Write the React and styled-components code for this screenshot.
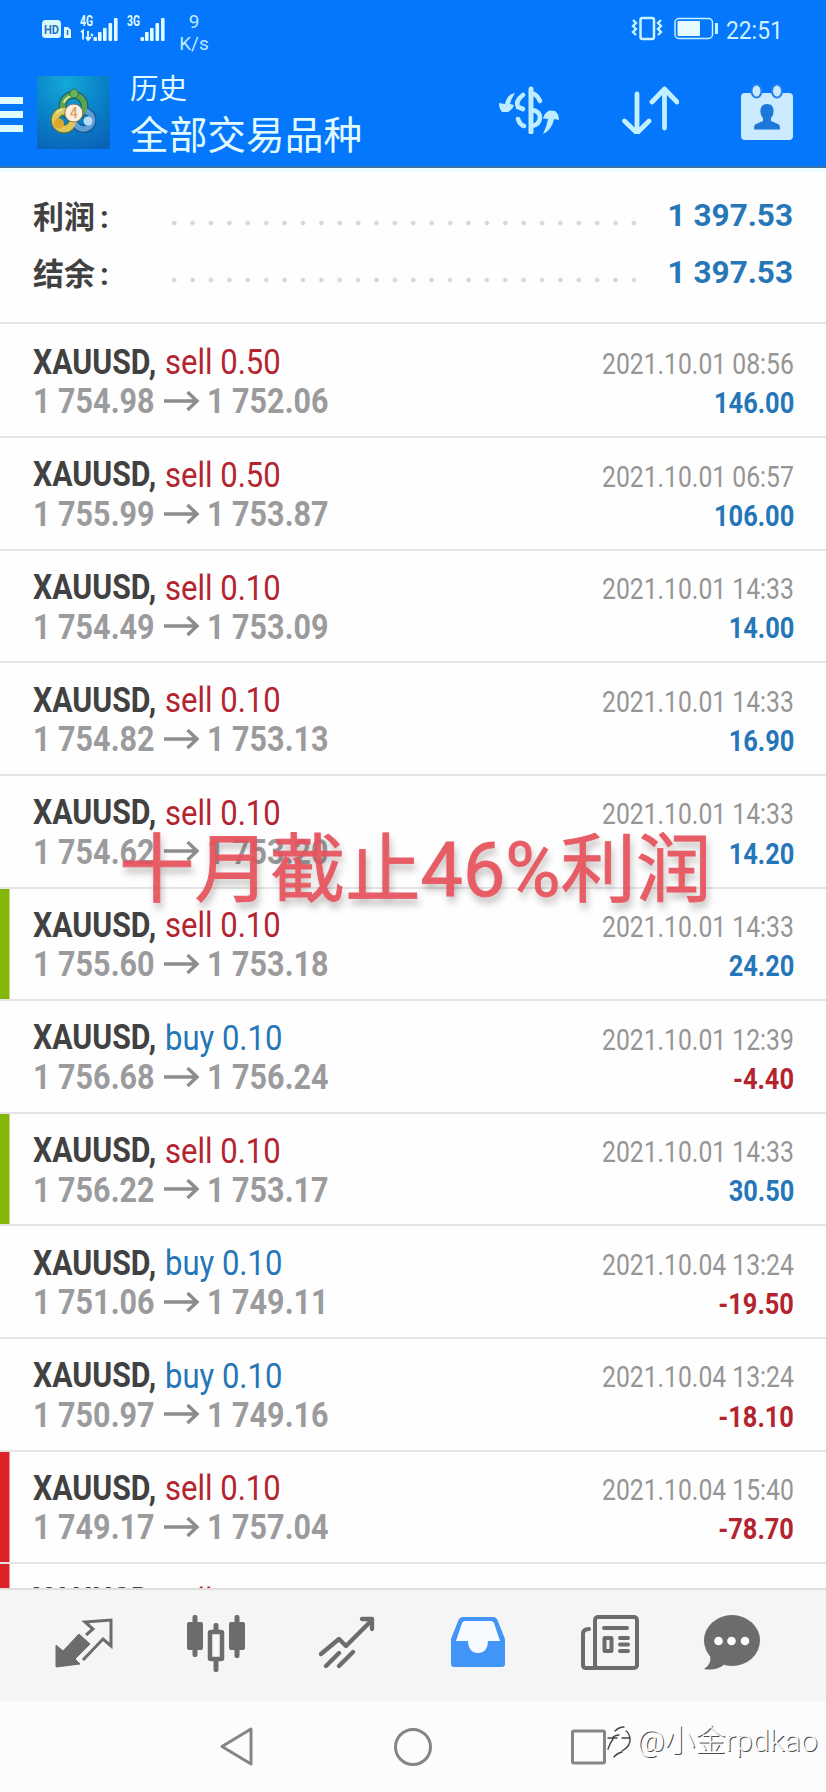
import React from 'react';
import styled, { createGlobalStyle, css } from 'styled-components';

const Global = createGlobalStyle`
  * { box-sizing: border-box; }
  html, body { margin: 0; padding: 0; background: #fdfdfd; }
  body { font-family: Roboto, "Noto Sans CJK SC", sans-serif; }
  svg { display: block; }
`;

const Screen = styled.div`
  position: relative;
  width: 826px;
  height: 1792px;
  overflow: hidden;
  display: flex;
  flex-direction: column;
  background: #fefefe;
`;

const Header = styled.header`
  flex: none;
  height: 168px;
  background: #0577fd;
  border-bottom: 2px solid #3a74a6;
  color: #e2fbff;
`;

const StatusBar = styled.div`
  display: flex;
  justify-content: space-between;
  height: 60px;
  padding: 11px 44px 0 41px;
`;

const StatusGroup = styled.div`
  display: flex;
  align-items: flex-start;
`;

const StatusItem = styled.div`
  margin-top: ${(p) => p.$top}px;
  margin-left: ${(p) => p.$left || 0}px;
`;

const Speed = styled.div`
  width: 30px;
  margin-left: 12px;
  text-align: center;
  font-size: 19px;
  line-height: 22px;
  color: #bfe9ff;
`;

const Clock = styled.div`
  width: 56px;
  margin-left: 7px;
  font-size: 26.5px;
  line-height: 38px;
  color: #cdf1ff;
  white-space: nowrap;
  span { display: inline-block; transform: scaleX(0.86); transform-origin: left; }
`;

const AppBar = styled.div`
  display: flex;
  align-items: flex-start;
  height: 106px;
`;

const MenuButton = styled.div`
  display: flex;
  flex-direction: column;
  gap: 7.5px;
  width: 23px;
  margin-top: 37px;
  i { height: 6.5px; background: #dffcff; }
`;

const AppIcon = styled.div`
  margin: 16px 0 0 14px;
`;

const Titles = styled.div`
  margin: 10px 0 0 20px;
  width: 290px;
`;

const Caption = styled.div`
  font-size: 28.5px;
  line-height: 34px;
  font-family: "Noto Sans CJK SC", sans-serif;
`;

const Heading = styled.div`
  margin-top: 4px;
  font-size: 38.7px;
  line-height: 48px;
  white-space: nowrap;
  font-family: "Noto Sans CJK SC", sans-serif;
`;

const Actions = styled.div`
  display: flex;
  align-items: flex-start;
  padding-top: 24px;
  margin-left: 78px;
  gap: 61px;
`;

const Summary = styled.section`
  flex: none;
  height: 154px;
  padding: 15px 33px 0;
  border-top: 4px solid #eafdff;
`;

const SummaryRow = styled.div`
  display: flex;
  align-items: center;
  height: 57.3px;
`;

const SummaryLabel = styled.div`
  width: 132px;
  font: 700 31px/57px "Noto Sans CJK SC", sans-serif;
  color: #414141;
  span { font-family: Roboto; margin-left: 5px; }
`;

const Dots = styled.div`
  width: 478px;
  height: 6px;
  margin-top: 14px;
  background: radial-gradient(circle, #d6d6d6 0 1.6px, transparent 2.9px) 0 0 / 18.4px 6px repeat-x;
`;

const SummaryValue = styled.div`
  flex: 1;
  text-align: right;
  font-size: 31.5px;
  font-weight: 700;
  color: #2676b8;
  white-space: nowrap;
`;

const List = styled.section`
  flex: none;
  height: 1266px;
  overflow: hidden;
  border-top: 2px solid #e4e4e4;
`;

const edgeColors = { green: '#83b50a', red: '#dc2227' };

const Row = styled.article`
  display: flex;
  justify-content: space-between;
  height: ${(p) => (p.$first ? 114.2 : 112.6)}px;
  padding: ${(p) => (p.$first ? 18.5 : 17)}px 32px 0 33px;
  border-bottom: 2px solid #e4e4e4;
  ${(p) => p.$edge && css`
    background: linear-gradient(${edgeColors[p.$edge]}, ${edgeColors[p.$edge]}) left / 9.5px 100% no-repeat;
  `}
`;

const Line = styled.div`
  display: flex;
  align-items: center;
  height: 39.6px;
  white-space: nowrap;
`;

const Narrow = styled.span`
  display: block;
  transform: scaleX(${(p) => p.$x});
  transform-origin: ${(p) => p.$from || 'left'};
`;

const Cell = styled.span`
  display: block;
  width: ${(p) => p.$w}px;
`;

const Symbol = styled(Narrow)`
  font-size: 35px;
  font-weight: 700;
  color: #414141;
`;

const Order = styled(Narrow)`
  font-size: 35.5px;
  color: ${(p) => (p.$buy ? '#2476b8' : '#b3242f')};
`;

const Price = styled(Narrow)`
  font-size: 35px;
  font-weight: 700;
  color: #9b9b9d;
`;

const Side = styled.div`
  display: flex;
  flex-direction: column;
  align-items: flex-end;
  padding-top: 1.2px;
`;

const Time = styled(Narrow)`
  font-size: 30px;
  color: #959595;
`;

const Profit = styled(Narrow)`
  font-size: 29.5px;
  font-weight: 700;
  color: ${(p) => (p.$loss ? '#b3242f' : '#2476b8')};
`;

const Banner = styled.div`
  position: absolute;
  left: 119px;
  top: 815px;
  font: 400 75.4px/110px Roboto, "Noto Sans CJK SC", sans-serif;
  -webkit-text-stroke: 0.8px #e6505a;
  color: #e6505a;
  opacity: 0.92;
  text-shadow: 2px 6px 7px rgba(70, 50, 50, 0.36);
  white-space: nowrap;
`;

const TabBar = styled.nav`
  flex: none;
  display: grid;
  grid-template-columns: repeat(5, 131.4px) 114px;
  justify-items: center;
  height: 113px;
  padding: 24px 0 0 18.5px;
  background: #f5f5f5;
  border-top: 2px solid #dedede;
  color: #6c6c6c;
`;

const SystemBar = styled.div`
  flex: 1;
  display: flex;
  align-items: flex-start;
  padding: 25px 0 0 219px;
  background: #fcfcfc;
`;

const SysSlot = styled.div`
  width: ${(p) => p.$w}px;
`;

const Watermark = styled.div`
  position: absolute;
  left: 607px;
  top: 1720px;
  display: flex;
  align-items: center;
  color: #fcfcfc;
  font: 300 30.4px/42px Roboto, "Noto Sans CJK SC", sans-serif;
  text-shadow: 1px 1px 0.5px #4a4a4a;
  white-space: nowrap;
  span { margin-left: 5px; display: block; }
`;

function Signal({ label, data }) {
  return (
    <svg width="40" height="30" viewBox="0 0 40 30" fill="currentColor">
      <text x="0" y="14" fontSize="14" fontWeight="700" textLength="13" lengthAdjust="spacingAndGlyphs">{label}</text>
      {data && <path d="M1 20l2-1.500v9M8 19v8M6 25l2 3 3-3M11 22l2 2" stroke="currentColor" strokeWidth="1.800" fill="none" />}
      {[[13.5, 4], [18, 9], [23, 13], [28.500, 18], [34, 23]].map(([x, h]) => (
        <rect key={x} x={x} y={29 - h} width="3.600" height={h} rx="1" />
      ))}
    </svg>
  );
}

function HdBadge() {
  return (
    <svg width="31" height="20" viewBox="0 0 31 20">
      <rect x="1" y="1" width="19" height="18" rx="3.500" fill="#d9f8ff" />
      <text x="3" y="14.500" fontSize="12.500" fontWeight="700" fill="#2a74c0" textLength="15" lengthAdjust="spacingAndGlyphs">HD</text>
      <path d="M23 8h4l3 3v8h-7z" fill="#d9f8ff" />
      <path d="M26.500 11v5" stroke="#2a74c0" strokeWidth="1.500" />
    </svg>
  );
}

function VibrateAndBattery() {
  return (
    <svg width="88" height="26" viewBox="0 0 88 26" fill="none" stroke="#c8f2ff">
      <rect x="9.500" y="2" width="13.500" height="21" rx="2" strokeWidth="2.500" />
      <path d="M2 4l3 3-3 3 3 3-3 3 3 3M30 4l-3 3 3 3-3 3 3 3-3 3" strokeWidth="2.400" />
      <rect x="44" y="2.500" width="37.500" height="20" rx="4" strokeWidth="1.500" />
      <rect x="46.500" y="5" width="22.500" height="15" rx="1" fill="#e4fbff" stroke="none" />
      <path d="M85.500 7v11" strokeWidth="3" />
    </svg>
  );
}

function MetaLogo() {
  return (
    <svg width="73" height="73" viewBox="0 0 73 73">
      <defs>
        <radialGradient id="bg" cx=".4" cy=".1" r="1">
          <stop offset="0" stopColor="#14a9d8" />
          <stop offset=".5" stopColor="#0a82c8" />
          <stop offset="1" stopColor="#0a62b8" />
        </radialGradient>
      </defs>
      <rect width="73" height="73" fill="url(#bg)" />
      <g fill="none">
        <circle cx="36.500" cy="30" r="11" stroke="#1f6166" strokeWidth="8" />
        <circle cx="27" cy="44" r="9" stroke="#5e7340" strokeWidth="9" />
        <circle cx="46.500" cy="44" r="9" stroke="#1d548f" strokeWidth="8" />
        <circle cx="46.500" cy="44" r="9" stroke="#5d9fd6" strokeWidth="5.500" />
        <circle cx="36.500" cy="30" r="11" stroke="#58a350" strokeWidth="5.500" />
        <circle cx="27" cy="44" r="9" stroke="#dcc75a" strokeWidth="6.500" />
        <path d="M27 26q3-6 9-6M20 37q1-3 5-3" stroke="#d9e8a0" strokeWidth="2" strokeLinecap="round" />
      </g>
      <circle cx="37" cy="17.500" r="4.300" fill="#66b35c" stroke="#2c6e5a" />
      <circle cx="22" cy="47.500" r="5" fill="#dba72c" />
      <circle cx="51" cy="45" r="4.500" fill="#b9dcf4" />
      <circle cx="36.800" cy="37" r="9" fill="#f9efe2" stroke="#8b7250" />
      <text x="36.800" y="42" textAnchor="middle" fontSize="14" fontWeight="500" fill="#dda060">4</text>
    </svg>
  );
}

function CurrencyIcon() {
  return (
    <svg width="62" height="50" viewBox="0 0 62 50" fill="none" stroke="#bdedff" strokeWidth="4.600" strokeLinecap="round">
      <path d="M33 5v43" strokeWidth="5" />
      <path d="M33 9q6 1 9 8M25 11q-8 6-5 12l5 2M34 26q8 1 8 8-1 7-8 8M20 35q2 6 6 7" />
      <path d="M17 9q-8 1-10 11l-6-1q0 6 3 9h6q5-3 6-7l-4-1q1-5 5-11z" fill="#bdedff" stroke="none" />
      <path d="M45 50q9-4 11-15l5 1q0-6-4-9l-6-.500q-5 3-6 8l5 .5q-1 7-5 15z" fill="#bdedff" stroke="none" />
    </svg>
  );
}

function SortIcon() {
  return (
    <svg width="58" height="50" viewBox="0 0 58 50" fill="none" stroke="#c3f0ff" strokeWidth="4.800" strokeLinecap="round" strokeLinejoin="round">
      <path d="M16 11v39M3.500 38L16 50l12-12M43.500 45V6M31 19L43.500 6 56 19" transform="translate(0 -1)" />
    </svg>
  );
}

function CalendarIcon() {
  return (
    <svg width="54" height="56" viewBox="0 0 54 56">
      <rect x="1" y="9" width="52" height="47" rx="4" fill="#cbeaff" />
      <g fill="#cbeaff" stroke="#2181ed" strokeWidth="2">
        <ellipse cx="16.500" cy="7" rx="5" ry="6.500" />
        <ellipse cx="37" cy="7" rx="5" ry="6.500" />
      </g>
      <path d="M27 20c-5 0-7 3.500-6.500 8 .3 3 1 4.500 2.500 6v3l-8 3.500q-1 1-1 5h26q0-4-1-5l-8-3.500v-3c1.500-1.500 2.200-3 2.500-6 .5-4.500-1.500-8-6.500-8z" fill="#1b77d8" />
    </svg>
  );
}

function ArrowIcon() {
  return (
    <svg width="54" height="22" viewBox="0 0 54 22" fill="none" stroke="#8d8d8d" strokeWidth="3.400">
      <path d="M11 10h33M34.500 1L44 10l-9.500 9" />
    </svg>
  );
}

function QuotesIcon() {
  return (
    <svg width="58" height="58" viewBox="0 0 58 58">
      <path d="M24 20l11 10-15 15 5 5-24 3V31l7 6z" fill="currentColor" stroke="currentColor" strokeLinejoin="round" />
      <path d="M31 21l7-6-8-7 26-2v26l-8-7-20 21" fill="none" stroke="currentColor" strokeWidth="3" />
    </svg>
  );
}

function CandlesIcon() {
  return (
    <svg width="60" height="60" viewBox="0 0 60 60" fill="currentColor">
      <rect x="1" y="8" width="16" height="28" rx="2" />
      <rect x="6.500" y="1" width="5" height="42" rx="2" />
      <rect x="43" y="8" width="16" height="28" rx="2" />
      <rect x="48.500" y="1" width="5" height="43" rx="2" />
      <rect x="27.500" y="9" width="5" height="49" rx="2" />
      <rect x="24" y="18" width="12" height="27" rx="1" fill="#f8f8f8" stroke="currentColor" strokeWidth="4.500" />
    </svg>
  );
}

function TrendIcon() {
  return (
    <svg width="56" height="58" viewBox="0 0 56 58" fill="none" stroke="currentColor" strokeWidth="4.300" strokeLinecap="round" strokeLinejoin="round">
      <path d="M2 40l18-15 7 7L53 6M43 5h10v10M7 52l13-13M20 52l14-14" />
    </svg>
  );
}

function InboxIcon() {
  return (
    <svg width="56" height="58" viewBox="0 0 56 58">
      <path d="M13 3h30q3 0 4.500 3L55 25v25q0 3-3 3H4q-3 0-3-3V25L8.500 6Q10 3 13 3z" fill="#4295f8" />
      <path d="M15 7h26q2 0 3 2l6 18H38q-.5 12-10 12T18 27H6L12 9q1-2 3-2z" fill="#f7fbff" />
    </svg>
  );
}

function NewsIcon() {
  return (
    <svg width="58" height="58" viewBox="0 0 58 58" fill="none" stroke="currentColor" strokeWidth="4" strokeLinecap="round" strokeLinejoin="round">
      <rect x="14" y="3" width="42" height="51" rx="3" />
      <path d="M8 15q-6 0-6 5v31q0 3 3 3h10M23 14h23M39 24h8M39 30.500h8M39 37h8" />
      <rect x="23.500" y="24" width="7" height="13" rx=".5" />
    </svg>
  );
}

function ChatIcon() {
  return (
    <svg width="58" height="58" viewBox="0 0 58 58">
      <ellipse cx="29" cy="26.500" rx="28" ry="25.500" fill="currentColor" />
      <path d="M7 42q2 8-6 13 11 2 20-4z" fill="currentColor" />
      <g fill="#fff"><circle cx="15.500" cy="27" r="4.300" /><circle cx="28.500" cy="27" r="4.300" /><circle cx="42" cy="27" r="4.300" /></g>
    </svg>
  );
}

const trades = [
  ['sell 0.50', '1 754.98', '1 752.06', '2021.10.01 08:56', '146.00'],
  ['sell 0.50', '1 755.99', '1 753.87', '2021.10.01 06:57', '106.00'],
  ['sell 0.10', '1 754.49', '1 753.09', '2021.10.01 14:33', '14.00'],
  ['sell 0.10', '1 754.82', '1 753.13', '2021.10.01 14:33', '16.90'],
  ['sell 0.10', '1 754.62', '1 753.20', '2021.10.01 14:33', '14.20'],
  ['sell 0.10', '1 755.60', '1 753.18', '2021.10.01 14:33', '24.20', 'green'],
  ['buy 0.10', '1 756.68', '1 756.24', '2021.10.01 12:39', '-4.40'],
  ['sell 0.10', '1 756.22', '1 753.17', '2021.10.01 14:33', '30.50', 'green'],
  ['buy 0.10', '1 751.06', '1 749.11', '2021.10.04 13:24', '-19.50'],
  ['buy 0.10', '1 750.97', '1 749.16', '2021.10.04 13:24', '-18.10'],
  ['sell 0.10', '1 749.17', '1 757.04', '2021.10.04 15:40', '-78.70', 'red'],
  ['sell 0.10', '', '', '', '', 'red'],
];

function Trade({ trade, first }) {
  const [order, open, close, time, profit, edge] = trade;
  return (
    <Row $first={first} $edge={edge}>
      <div>
        <Line>
          <Cell $w={132}><Symbol $x={0.865}>XAUUSD,</Symbol></Cell>
          <Order $x={0.874} $buy={order.startsWith('buy')}>{order}</Order>
        </Line>
        {open && (
          <Line>
            <Cell $w={119.5}><Price $x={0.872}>{open}</Price></Cell>
            <ArrowIcon />
            <Price $x={0.872}>{close}</Price>
          </Line>
        )}
      </div>
      <Side>
        <Line><Time $x={0.824} $from="right">{time}</Time></Line>
        <Line><Profit $x={0.86} $from="right" $loss={profit.startsWith('-')}>{profit}</Profit></Line>
      </Side>
    </Row>
  );
}

export default function App() {
  return (
    <Screen>
      <Global />
      <Header>
        <StatusBar>
          <StatusGroup>
            <StatusItem $top={8}><HdBadge /></StatusItem>
            <StatusItem $top={1} $left={8}><Signal label="4G" data /></StatusItem>
            <StatusItem $top={1} $left={7}><Signal label="3G" /></StatusItem>
            <Speed>9<br />K/s</Speed>
          </StatusGroup>
          <StatusGroup>
            <StatusItem $top={5}><VibrateAndBattery /></StatusItem>
            <Clock><span>22:51</span></Clock>
          </StatusGroup>
        </StatusBar>
        <AppBar>
          <MenuButton><i /><i /><i /></MenuButton>
          <AppIcon><MetaLogo /></AppIcon>
          <Titles>
            <Caption>历史</Caption>
            <Heading>全部交易品种</Heading>
          </Titles>
          <Actions>
            <CurrencyIcon />
            <SortIcon />
            <CalendarIcon />
          </Actions>
        </AppBar>
      </Header>
      <Summary>
        {['利润', '结余'].map((label) => (
          <SummaryRow key={label}>
            <SummaryLabel>{label}<span>:</span></SummaryLabel>
            <Dots />
            <SummaryValue>1 397.53</SummaryValue>
          </SummaryRow>
        ))}
      </Summary>
      <List>
        {trades.map((t, i) => <Trade key={i} trade={t} first={i === 0} />)}
      </List>
      <TabBar>
        <QuotesIcon />
        <CandlesIcon />
        <TrendIcon />
        <InboxIcon />
        <NewsIcon />
        <ChatIcon />
      </TabBar>
      <SystemBar>
        <SysSlot $w={175}>
          <svg width="36" height="42" viewBox="0 0 36 42"><path d="M32 3v35L3 20.500z" fill="none" stroke="#858585" strokeWidth="3" strokeLinejoin="round" /></svg>
        </SysSlot>
        <SysSlot $w={176}>
          <svg width="40" height="42" viewBox="0 0 40 42"><circle cx="19" cy="21" r="17.500" fill="none" stroke="#858585" strokeWidth="3" /></svg>
        </SysSlot>
        <svg width="38" height="42" viewBox="0 0 38 42"><rect x="2.500" y="5" width="32" height="32" rx="1.500" fill="none" stroke="#858585" strokeWidth="3" /></svg>
      </SystemBar>
      <Banner>十月截止46%利润</Banner>
      <Watermark>
        <svg width="25" height="34" viewBox="0 0 25 34" fill="none" stroke="#444" strokeWidth="1.400" strokeLinecap="round">
          <path d="M1 25q2-6 5-10M8 7q4-4 9-4M1 14h9M6 13q3-2 6-2M15 14h8q1 8-8 13M23 14q-1-5-4-7M7 33q2-3 8-5" />
        </svg>
        <span>@小金rpdkao</span>
      </Watermark>
    </Screen>
  );
}
